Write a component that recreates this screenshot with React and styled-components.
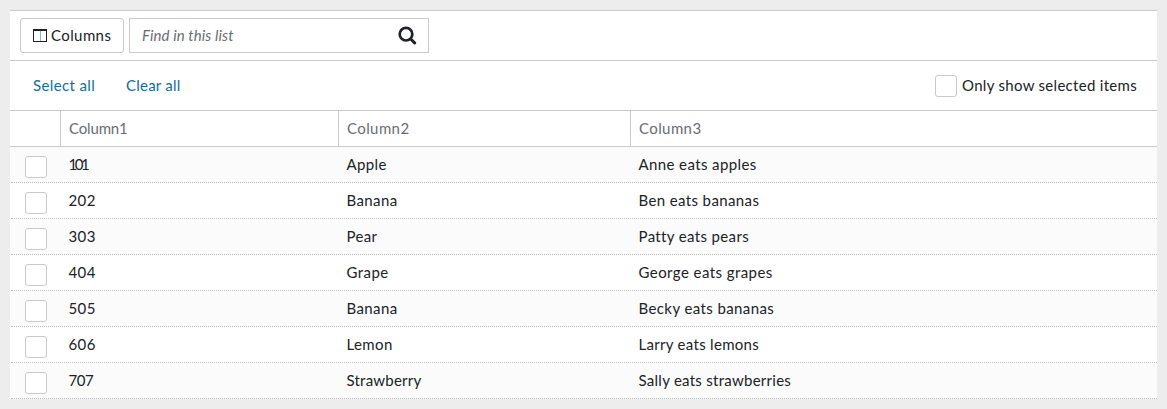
import React from "react";
import styled, { createGlobalStyle, css } from "styled-components";

const line = "#c9cacd";

const Global = createGlobalStyle`
  * { box-sizing: border-box; }
  body {
    margin: 0;
    background: #ededed;
    color: #202226;
    font-family: Lato, "Liberation Sans", sans-serif;
    font-size: 15px;
    line-height: 20px;
  }
`;

const Page = styled.main`
  padding: 10px;
  height: 409px;
`;

const Panel = styled.section`
  border-top: 1px solid ${line};
  background: #fff;
`;

const Label = styled.span`
  display: block;
  padding-bottom: 2px;
  white-space: nowrap;
  letter-spacing: ${({ $spacing = 0.38 }) => $spacing}px;
`;

const Toolbar = styled.div`
  display: flex;
  gap: 5px;
  height: 50px;
  padding: 7px 10px;
  border-bottom: 1px solid ${line};
`;

const ColumnsButton = styled.button`
  display: flex;
  align-items: center;
  gap: 4px;
  width: 104px;
  height: 35px;
  padding: 0 0 0 12px;
  border: 1px solid ${line};
  border-radius: 3px;
  background: #fff;
  color: inherit;
  font: inherit;
`;

const SearchBox = styled.div`
  display: flex;
  align-items: center;
  justify-content: space-between;
  width: 300px;
  height: 35px;
  padding: 0 11px 0 12px;
  border: 1px solid ${line};
  color: #6a6d73;
  font-style: italic;
`;

const Actions = styled.div`
  display: flex;
  align-items: center;
  height: 50px;
  padding: 0 20px 0 23px;
  border-bottom: 1px solid ${line};
`;

const TextLink = styled.a`
  width: 93px;
  color: #0f6f9e;
`;

const OnlySelected = styled.label`
  display: flex;
  align-items: center;
  gap: 5px;
  width: 202px;
  margin-left: auto;
`;

const Checkbox = styled.span`
  display: block;
  flex: none;
  width: 22px;
  height: 22px;
  border: 1px solid ${line};
  border-radius: 3px;
  background: #fff;
`;

const gridRow = css`
  display: grid;
  grid-template-columns: 50px 278px 292px 1fr;
  height: 36px;
`;

const HeaderRow = styled.div`
  ${gridRow}
  height: 36px;
  border-bottom: 1px solid ${line};
  color: #6a6d73;
`;

const HeaderCell = styled.div`
  padding: 7px 0 0 8px;
  & + & { border-left: 1px solid ${line}; }
`;

const Row = styled.div`
  ${gridRow}
  margin-left: 1px;
  grid-template-columns: 49px 278px 292px 1fr;
  background: ${({ $shaded }) => ($shaded ? "#fbfbfb" : "#fff")};
  border-bottom: 1px dotted #bfbfbf;
`;

const Cell = styled.div`
  padding: 7px 0 0 8.5px;
`;

const CheckCell = styled.div`
  padding: 9px 0 0 14px;
`;

const ColumnsIcon = () => (
  <svg width="14" height="13" viewBox="0 0 14 13" fill="none" shapeRendering="crispEdges">
    <path d="M7.5 2V12" stroke="#8fb4d3" />
    <path d="M.5 1V12.5H13.5V1" stroke="#202226" />
    <path d="M0 1H14" stroke="#202226" strokeWidth="2" />
  </svg>
);

const SearchIcon = () => (
  <svg width="19" height="19" viewBox="0 0 19 19" fill="none" stroke="#202226">
    <circle cx="8" cy="8.2" r="6.3" strokeWidth="2.7" />
    <path d="M12.7 13L16.6 16.9" strokeWidth="3" strokeLinecap="round" />
  </svg>
);

const headings = [
  ["Column1", -0.15],
  ["Column2", 0.4],
  ["Column3", 0.4],
];

const rows = [
  [["101", -2.5], ["Apple", 0.35], ["Anne eats apples", 0.4]],
  [["202", 0.4], ["Banana", 0.38], ["Ben eats bananas", 0.38]],
  [["303", 0.4], ["Pear", 0.38], ["Patty eats pears", 0.36]],
  [["404", 0.4], ["Grape", 0.45], ["George eats grapes", 0.43]],
  [["505", 0.4], ["Banana", 0.38], ["Becky eats bananas", 0.4]],
  [["606", 0.4], ["Lemon", 0.4], ["Larry eats lemons", 0.3]],
  [["707", -0.5], ["Strawberry", 0.22], ["Sally eats strawberries", 0.27]],
];

export default function App() {
  return (
    <>
      <Global />
      <Page>
        <Panel>
          <Toolbar>
            <ColumnsButton><ColumnsIcon /><Label $spacing={0.4}>Columns</Label></ColumnsButton>
            <SearchBox><Label $spacing={0.1}>Find in this list</Label><SearchIcon /></SearchBox>
          </Toolbar>
          <Actions>
            <TextLink><Label>Select all</Label></TextLink>
            <TextLink><Label $spacing={0.22}>Clear all</Label></TextLink>
            <OnlySelected><Checkbox /><Label $spacing={0.3}>Only show selected items</Label></OnlySelected>
          </Actions>
          <HeaderRow>
            <HeaderCell />
            {headings.map(([text, spacing]) => (
              <HeaderCell key={text}><Label $spacing={spacing}>{text}</Label></HeaderCell>
            ))}
          </HeaderRow>
          {rows.map((cells, i) => (
            <Row key={cells[0][0]} $shaded={i % 2 === 0}>
              <CheckCell><Checkbox /></CheckCell>
              {cells.map(([text, spacing]) => (
                <Cell key={text}><Label $spacing={spacing}>{text}</Label></Cell>
              ))}
            </Row>
          ))}
        </Panel>
      </Page>
    </>
  );
}
